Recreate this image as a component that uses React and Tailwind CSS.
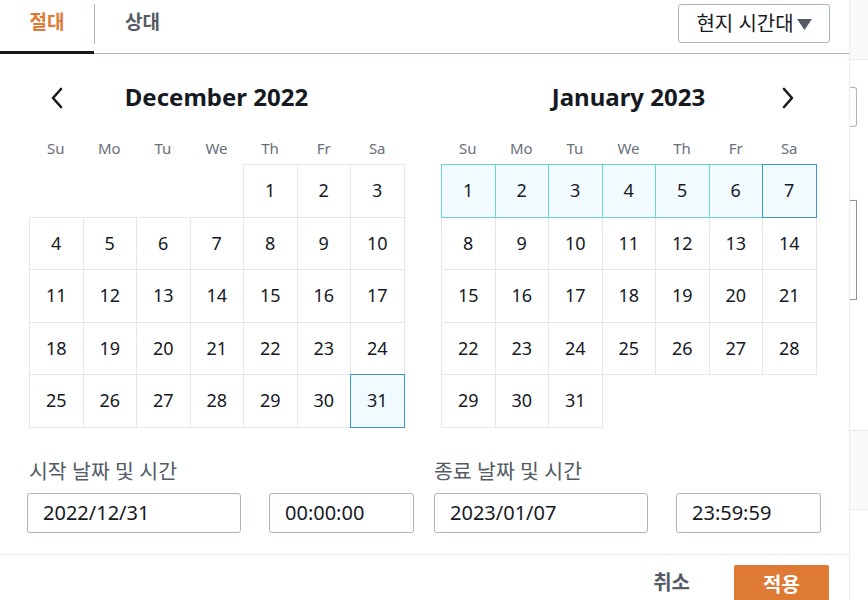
import React from 'react';

const FONT = { fontFamily: '"Noto Sans", "Noto Sans CJK KR", sans-serif' };
const DAY_NAMES = ['Su', 'Mo', 'Tu', 'We', 'Th', 'Fr', 'Sa'];

// cells: null = empty slot, otherwise { d, state }
const decCells = [
  null, null, null, null,
  ...Array.from({ length: 31 }, (_, i) => ({ d: i + 1, state: i + 1 === 31 ? 'sel' : '' })),
];
const janCells = Array.from({ length: 31 }, (_, i) => ({
  d: i + 1,
  state: i + 1 === 7 ? 'sel' : i + 1 < 7 ? 'range' : '',
}));

const ChevronLeft = () => (
  <svg width="14" height="22" viewBox="0 0 14 22" fill="none">
    <path d="M11 2L3 11l8 9" stroke="#16191f" strokeWidth="2.6" strokeLinecap="round" strokeLinejoin="round" />
  </svg>
);
const ChevronRight = () => (
  <svg width="14" height="22" viewBox="0 0 14 22" fill="none">
    <path d="M3 2l8 9-8 9" stroke="#16191f" strokeWidth="2.6" strokeLinecap="round" strokeLinejoin="round" />
  </svg>
);

const DayCell = ({ cell }) => {
  if (!cell) return <div />;
  const cls =
    cell.state === 'sel'
      ? 'relative z-20 border-[#3b97cf] bg-[#f1faff]'
      : cell.state === 'range'
      ? 'relative z-10 border-[#6dd4c9] bg-[#f1faff]'
      : 'border-[#e6e8e8] bg-white';
  return (
    <div className={`-ml-px -mt-px flex items-center justify-center border text-[18px] text-[#16191f] ${cls}`}>
      {cell.d}
    </div>
  );
};

const Month = ({ title, cells, left, right }) => (
  <div className="w-[375px]">
    <div className="grid h-[32px] grid-cols-[56px_1fr_56px] items-center">
      <div className="flex justify-center pt-[1px]">{left && <ChevronLeft />}</div>
      <div className="text-center text-[24px] font-bold leading-[32px] text-[#16191f]">{title}</div>
      <div className="flex justify-center pt-[1px]">{right && <ChevronRight />}</div>
    </div>
    <div className="mt-[25px] grid grid-cols-7 text-center text-[15px] leading-[20px] text-[#687078]">
      {DAY_NAMES.map((n) => (
        <div key={n}>{n}</div>
      ))}
    </div>
    <div className="mt-[7px] ml-px grid grid-cols-[repeat(7,53.5px)] auto-rows-[52.5px]">
      {cells.map((c, i) => (
        <DayCell key={i} cell={c} />
      ))}
    </div>
  </div>
);

const Field = ({ value, w }) => (
  <div className={`flex h-[40px] items-center rounded-[3px] border border-[#aab7b8] pl-[15px] text-[20px] text-[#16191f] ${w}`}>
    {value}
  </div>
);

export default function App() {
  return (
    <div className="flex h-[600px] w-[868px] overflow-hidden bg-white" style={FONT}>
      {/* popup */}
      <div className="flex w-[850px] shrink-0 flex-col border-r border-[#eaeded]">
        {/* tabs */}
        <div className="flex h-[54px] shrink-0 items-stretch border-b border-[#aab7b8] pr-[19px]">
          <div className="-mb-px flex w-[94px] items-start justify-center border-b-[3px] border-[#16191f] pt-[7px]">
            <span className="text-[19px] font-bold leading-[30px] text-[#e07a34]">절대</span>
          </div>
          <div className="mt-[4px] h-[40px] w-px bg-[#aab7b8]" />
          <div className="flex w-[95px] items-start justify-center pt-[7px]">
            <span className="text-[19px] font-bold leading-[30px] text-[#545b64]">상대</span>
          </div>
          <div className="flex-1" />
          <div className="mt-[4px] flex h-[39px] w-[152px] items-center justify-center gap-[3px] rounded-[3px] border border-[#aab7b8] text-[20px] text-[#16191f]">
            <span>현지 시간대</span>
            <svg width="15" height="12" viewBox="0 0 15 12">
              <path d="M0 1h15L7.5 12z" fill="#545b64" />
            </svg>
          </div>
        </div>

        {/* calendars */}
        <div className="mt-[27px] flex shrink-0 gap-[37px] pl-[29px]">
          <Month title="December 2022" cells={decCells} left />
          <Month title="January 2023" cells={janCells} right />
        </div>

        {/* date/time inputs */}
        <div className="mt-[30px] flex shrink-0 gap-[20px] pl-[27px]">
          <div>
            <div className="pl-[2px] text-[20.5px] leading-[26px] text-[#545b64]">시작 날짜 및 시간</div>
            <div className="mt-[9px] flex gap-[28px]">
              <Field value="2022/12/31" w="w-[214px]" />
              <Field value="00:00:00" w="w-[145px]" />
            </div>
          </div>
          <div>
            <div className="text-[20.5px] leading-[26px] text-[#545b64]">종료 날짜 및 시간</div>
            <div className="mt-[9px] flex gap-[28px]">
              <Field value="2023/01/07" w="w-[214px]" />
              <Field value="23:59:59" w="w-[145px]" />
            </div>
          </div>
        </div>

        {/* footer */}
        <div className="mt-[21px] flex shrink-0 justify-end gap-[44px] border-t border-[#eaeded] pr-[20px] pt-[10px]">
          <div className="flex h-[36px] items-center text-[20px] font-bold text-[#545b64]">취소</div>
          <div className="flex h-[40px] w-[95px] items-center justify-center rounded-[2px] bg-[#df7a34] text-[20px] font-bold text-white">
            적용
          </div>
        </div>
      </div>

      {/* page behind the popup */}
      <div className="flex flex-1 flex-col">
        <div className="h-[60px] shrink-0 border-b border-[#eaeded] bg-[#fafafa]" />
        <div className="mt-[27px] h-[40px] w-[7px] shrink-0 rounded-r-[3px] border-y border-r border-[#aab7b8]" />
        <div className="mt-[73px] h-[100px] w-[7px] shrink-0 border-y border-r border-[#879596]" />
        <div className="mt-[130px] h-[80px] shrink-0 border-y border-[#eaeded] bg-[#fafafa]" />
      </div>
    </div>
  );
}
